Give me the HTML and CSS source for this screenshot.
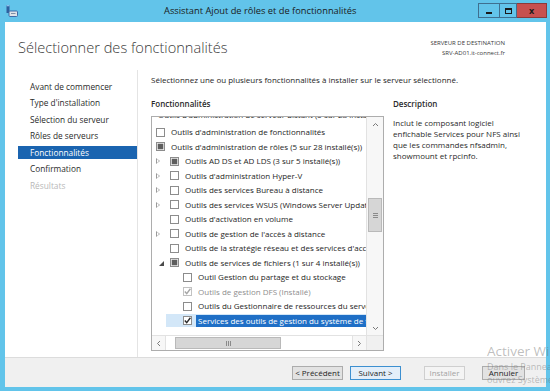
FILE: index.html
```html
<!DOCTYPE html>
<html lang="fr">
<head>
<meta charset="utf-8">
<title>Assistant Ajout de rôles et de fonctionnalités</title>
<link rel="stylesheet" href="styles.css">
</head>
<body>
<div class="window">
  <div class="titlebar">
    <svg class="appicon" width="12" height="12" viewBox="0 0 12 12">
      <rect x="0.5" y="0" width="3" height="8" fill="#2d5f9e"/>
      <rect x="0.5" y="0" width="3" height="1.3" fill="#8fc0ea"/>
      <rect x="3" y="6" width="8.5" height="5.5" rx="1" fill="#dfe3e8" stroke="#3d6ca8" stroke-width="1"/>
      <rect x="5" y="8" width="4.5" height="1" fill="#7d8fa6"/>
    </svg>
    <div class="title">Assistant Ajout de rôles et de fonctionnalités</div>
    <div class="controls">
      <span class="ctl min"><i></i></span>
      <span class="ctl max"><i></i></span>
      <span class="ctl close">x</span>
    </div>
  </div>

  <div class="client">
    <div class="header">
      <h1>Sélectionner des fonctionnalités</h1>
      <div class="dest">
        <div>SERVEUR DE DESTINATION</div>
        <div>SRV-AD01.it-connect.fr</div>
      </div>
    </div>

    <div class="body">
      <nav class="steps">
        <div class="step">Avant de commencer</div>
        <div class="step">Type d'installation</div>
        <div class="step">Sélection du serveur</div>
        <div class="step">Rôles de serveurs</div>
        <div class="step active">Fonctionnalités</div>
        <div class="step">Confirmation</div>
        <div class="step disabled">Résultats</div>
      </nav>

      <div class="main">
        <p class="intro">Sélectionnez une ou plusieurs fonctionnalités à installer sur le serveur sélectionné.</p>
        <div class="cols">
          <div class="featcol">
            <div class="label">Fonctionnalités</div>
            <div class="listbox">
              <div class="listview">
                <div class="rows">
                  <div class="row l1"><span class="lbl">Outils d'administration de serveur distant (5 sur 28 installé(s))</span></div>
                  <div class="row l2"><span class="cb"></span><span class="lbl">Outils d'administration de fonctionnalités</span></div>
                  <div class="row l2"><span class="cb ind"></span><span class="lbl">Outils d'administration de rôles (5 sur 28 installé(s))</span></div>
                  <div class="row l3"><span class="tw col"></span><span class="cb ind"></span><span class="lbl">Outils AD DS et AD LDS (3 sur 5 installé(s))</span></div>
                  <div class="row l3"><span class="tw col"></span><span class="cb"></span><span class="lbl">Outils d'administration Hyper-V</span></div>
                  <div class="row l3"><span class="tw col"></span><span class="cb"></span><span class="lbl">Outils des services Bureau à distance</span></div>
                  <div class="row l3"><span class="tw col"></span><span class="cb"></span><span class="lbl">Outils des services WSUS (Windows Server Update Services)</span></div>
                  <div class="row l3"><span class="tw"></span><span class="cb"></span><span class="lbl">Outils d'activation en volume</span></div>
                  <div class="row l3"><span class="tw col"></span><span class="cb"></span><span class="lbl">Outils de gestion de l'accès à distance</span></div>
                  <div class="row l3"><span class="tw"></span><span class="cb"></span><span class="lbl">Outils de la stratégie réseau et des services d'accès</span></div>
                  <div class="row l3"><span class="tw exp"></span><span class="cb ind"></span><span class="lbl">Outils de services de fichiers (1 sur 4 installé(s))</span></div>
                  <div class="row l4"><span class="cb"></span><span class="lbl">Outil Gestion du partage et du stockage</span></div>
                  <div class="row l4 dis"><span class="cb chk"><svg viewBox="0 0 9 9"><path d="M1.8 4.6 L3.7 6.6 L7.4 1.8" fill="none" stroke="#a6a6a6" stroke-width="1.4"/></svg></span><span class="lbl">Outils de gestion DFS (Installé)</span></div>
                  <div class="row l4"><span class="cb"></span><span class="lbl">Outils du Gestionnaire de ressources du serveur de fichiers</span></div>
                  <div class="row l4 sel"><span class="cb chk"><svg viewBox="0 0 9 9"><path d="M1.8 4.6 L3.7 6.6 L7.4 1.8" fill="none" stroke="#2b2b2b" stroke-width="1.4"/></svg></span><span class="lbl hi">Services des outils de gestion du système de fichiers en réseau</span></div>
                </div>
                <div class="vscroll">
                  <div class="sbtn"><svg viewBox="0 0 7 5"><path d="M1 4 L3.5 1.5 L6 4" fill="none" stroke="#7a7a7a" stroke-width="1"/></svg></div>
                  <div class="vtrack"><div class="vthumb"><i></i><i></i><i></i></div></div>
                  <div class="sbtn"><svg viewBox="0 0 7 5"><path d="M1 1 L3.5 3.5 L6 1" fill="none" stroke="#7a7a7a" stroke-width="1"/></svg></div>
                </div>
              </div>
              <div class="hscroll">
                <div class="hbtn"><svg viewBox="0 0 5 7"><path d="M4 1 L1.5 3.5 L4 6" fill="none" stroke="#7a7a7a" stroke-width="1"/></svg></div>
                <div class="htrack"><div class="hthumb"><i></i><i></i><i></i></div></div>
                <div class="hbtn"><svg viewBox="0 0 5 7"><path d="M1 1 L3.5 3.5 L1 6" fill="none" stroke="#7a7a7a" stroke-width="1"/></svg></div>
                <div class="corner"></div>
              </div>
            </div>
          </div>
          <div class="desccol">
            <div class="label">Description</div>
            <p class="desc">Inclut le composant logiciel<br>enfichable Services pour NFS ainsi<br>que les commandes nfsadmin,<br>showmount et rpcinfo.</p>
          </div>
        </div>
      </div>
    </div>

    <div class="footer">
      <button class="btn">&lt; Précédent</button>
      <button class="btn primary">Suivant &gt;</button>
      <button class="btn disabled small1">Installer</button>
      <button class="btn small2">Annuler</button>
    </div>
  </div>

  <div class="watermark">
    <div class="wm1">Activer Windows</div>
    <div class="wm2">Dans le Panneau de configuration,</div>
    <div class="wm2">ouvrez Système pour activer Windows.</div>
  </div>
</div>
</body>
</html>
```

FILE: styles.css
```css
html, body {
  margin: 0;
  padding: 0;
}
body {
  width: 550px;
  height: 391px;
  overflow: hidden;
  background: #62c4ea;
  font-family: "Open Sans", "Noto Sans", "DejaVu Sans", sans-serif;
  color: #1e1e1e;
}
.window {
  position: relative;
  height: 391px;
  display: flex;
  flex-direction: column;
}

/* title bar */
.titlebar {
  height: 22px;
  flex: none;
  display: flex;
  align-items: flex-start;
}
.appicon {
  margin: 5px 0 0 6px;
  flex: none;
}
.title {
  margin-left: 146px;
  font-size: 9.3px;
  line-height: 22px;
  color: #1a1a1a;
  white-space: nowrap;
}
.controls {
  margin-left: auto;
  margin-right: 3px;
  margin-top: 3px;
  display: flex;
}
.ctl {
  height: 15px;
  box-sizing: border-box;
  border: 1px solid #3f6f8f;
  display: flex;
  align-items: center;
  justify-content: center;
}
.ctl.min {
  width: 21px;
  border-right: none;
  background: #62c4ea;
}
.ctl.min i {
  width: 6px;
  height: 2px;
  background: #1a1a1a;
  margin-top: 4px;
}
.ctl.max {
  width: 18px;
  background: #62c4ea;
}
.ctl.max i {
  width: 7px;
  height: 6px;
  box-sizing: border-box;
  border: 1px solid #1a1a1a;
  border-top-width: 2px;
}
.ctl.close {
  width: 30px;
  border-left: none;
  background: #c7504f;
  border-color: #8b3a3a;
  color: #1a1a1a;
  font-size: 9px;
  font-weight: 700;
  line-height: 13px;
}

/* client area */
.client {
  flex: 1;
  margin: 0 4px 4px 5px;
  background: #ffffff;
  display: flex;
  flex-direction: column;
  min-height: 0;
}
.header {
  height: 48px;
  flex: none;
  display: flex;
  justify-content: space-between;
  align-items: flex-start;
  padding: 0 41px 0 13px;
}
h1 {
  margin: 15px 0 0;
  font-weight: 300;
  font-size: 14.6px;
  line-height: 20px;
  color: #3a3a3a;
  white-space: nowrap;
}
.dest {
  margin-top: 16px;
  text-align: right;
  font-size: 6px;
  line-height: 10px;
  color: #3a3a3a;
}

.body {
  flex: 1;
  display: flex;
  min-height: 0;
}
.steps {
  width: 133px;
  flex: none;
  box-sizing: border-box;
  border-right: 1px solid #e4e4e4;
  padding: 9.5px 0 0 13px;
  display: flex;
  flex-direction: column;
  gap: 3.6px;
}
.step {
  height: 13px;
  line-height: 13px;
  padding-left: 12px;
  font-size: 8.3px;
  color: #2a2a2a;
  white-space: nowrap;
}
.step.active {
  background: #1a64b0;
  color: #ffffff;
}
.step.disabled {
  color: #b8b8b8;
}

.main {
  flex: 1;
  padding-left: 13px;
}
.intro {
  margin: 0;
  padding-top: 4px;
  font-size: 8px;
  line-height: 12px;
  white-space: nowrap;
}
.cols {
  display: flex;
  margin-top: 12px;
}
.label {
  font-size: 8px;
  line-height: 12px;
  font-weight: 600;
  color: #2a2a2a;
}
.featcol {
  width: 233px;
  flex: none;
}
.listbox {
  margin-top: 6px;
  width: 233px;
  height: 235px;
  box-sizing: border-box;
  border: 1px solid #adadad;
  display: flex;
  flex-direction: column;
}
.listview {
  flex: 1;
  display: flex;
  min-height: 0;
}
.rows {
  flex: 1;
  overflow: hidden;
  min-width: 0;
}
.row {
  height: 14.5px;
  display: flex;
  align-items: center;
  white-space: nowrap;
  font-size: 8px;
  color: #1e1e1e;
}
.row:first-child {
  margin-top: -6.75px;
}
.l1 {
  padding-left: 6px;
  align-items: flex-start;
}
.l1 .lbl {
  margin-left: 0;
  line-height: 9px;
}
.l2 { padding-left: 4px; }
.l3 { padding-left: 18px; }
.l4 { padding-left: 31px; }
.row.dis { color: #8e8e8e; }
.row.sel {
  margin-left: 14px;
  padding-left: 17px;
  background: linear-gradient(#d3e7f8, #d3e7f8) no-repeat 0 center / 100% 13px;
}
.lbl {
  margin-left: 6px;
  line-height: 12px;
}
.lbl.hi {
  background: #1f6fc6;
  color: #ffffff;
  margin-left: 4px;
  padding: 0 2px;
}
.cb {
  width: 9px;
  height: 9px;
  box-sizing: border-box;
  border: 1px solid #8c8c8c;
  background: #ffffff;
  flex: none;
  display: flex;
  align-items: center;
  justify-content: center;
}
.cb.ind::after {
  content: "";
  width: 5px;
  height: 5px;
  background: #5e5e5e;
  box-shadow: 0 0 0 0.5px #9a9a9a;
}
.cb.chk svg {
  width: 9px;
  height: 9px;
  flex: none;
}
.row.dis .cb { border-color: #c2c2c2; }
.tw {
  width: 6px;
  height: 7px;
  margin-left: -14px;
  margin-right: 8px;
  flex: none;
}
.tw.col {
  width: 0;
  height: 0;
  border-left: 4px solid #9a9a9a;
  border-top: 3.5px solid transparent;
  border-bottom: 3.5px solid transparent;
  position: relative;
  margin-right: 10px;
}
.tw.col::after {
  content: "";
  position: absolute;
  left: -3px;
  top: -2px;
  border-left: 2px solid #ffffff;
  border-top: 2px solid transparent;
  border-bottom: 2px solid transparent;
}
.tw.exp {
  width: 0;
  height: 0;
  border-right: 5px solid #4a4a4a;
  border-top: 5px solid transparent;
  margin-left: -11px;
  margin-right: 6px;
  margin-top: 2px;
}

/* scrollbars */
.vscroll {
  width: 16px;
  flex: none;
  border-left: 1px solid #e2e2e2;
  background: #f7f7f7;
  display: flex;
  flex-direction: column;
}
.sbtn {
  height: 14px;
  flex: none;
  display: flex;
  align-items: center;
  justify-content: center;
}
.sbtn svg { width: 7px; height: 5px; }
.vtrack {
  flex: 1;
  padding: 67px 1px 0;
}
.vthumb {
  height: 34px;
  box-sizing: border-box;
  border: 1px solid #b9b9b9;
  background: #d6d6d6;
  display: flex;
  flex-direction: column;
  align-items: center;
  justify-content: center;
  gap: 1px;
}
.vthumb i {
  width: 5px;
  height: 1px;
  background: #8a8a8a;
}
.hscroll {
  height: 14px;
  flex: none;
  border-top: 1px solid #e2e2e2;
  background: #f7f7f7;
  display: flex;
}
.hbtn {
  width: 13px;
  flex: none;
  display: flex;
  align-items: center;
  justify-content: center;
  border-right: 1px solid #e2e2e2;
}
.hbtn:nth-child(3) {
  border-right: none;
  border-left: 1px solid #e2e2e2;
}
.hbtn svg { width: 5px; height: 7px; }
.htrack {
  flex: 1;
  padding: 1px 0 1px 9px;
  background: #ffffff;
}
.hthumb {
  width: 106px;
  height: 100%;
  box-sizing: border-box;
  border: 1px solid #b9b9b9;
  background: #d6d6d6;
  display: flex;
  align-items: center;
  justify-content: center;
  gap: 1px;
}
.hthumb i {
  width: 1px;
  height: 5px;
  background: #8a8a8a;
}
.corner {
  width: 16px;
  flex: none;
  background: #f0f0f0;
  border-left: 1px solid #e2e2e2;
}

.desccol {
  margin-left: 9px;
  width: 145px;
}
.desc {
  margin: 6.5px 0 0;
  font-size: 8px;
  line-height: 11px;
  color: #2a2a2a;
  white-space: nowrap;
}

/* footer */
.footer {
  height: 30px;
  flex: none;
  box-sizing: border-box;
  border-top: 1px solid #dcdcdc;
  background: #f0f0f0;
  display: flex;
  justify-content: flex-end;
  align-items: flex-start;
  padding: 8px 21px 0 0;
}
.btn {
  height: 14px;
  width: 51px;
  box-sizing: border-box;
  padding: 0;
  border: 1px solid #acacac;
  background: #e2e2e2;
  font-family: "Open Sans", "Noto Sans", sans-serif;
  font-size: 8px;
  line-height: 12px;
  color: #1e1e1e;
  margin: 0;
}
.btn.primary {
  margin-left: 7px;
  border-color: #3c8fd0;
  background: #e3eef9;
}
.btn.small1 {
  width: 41px;
  margin-left: 23px;
}
.btn.small2 {
  width: 43px;
  margin-left: 17px;
}
.btn.disabled {
  color: #a3a3a3;
  border-color: #cfcfcf;
  background: #f4f4f4;
}

/* activation watermark overlay */
.watermark {
  position: absolute;
  left: 487px;
  top: 342px;
  white-space: nowrap;
  color: rgba(110, 110, 110, 0.45);
  pointer-events: none;
}
.wm1 {
  font-size: 13.5px;
  line-height: 18px;
}
.wm2 {
  font-size: 9px;
  line-height: 13px;
}
```
